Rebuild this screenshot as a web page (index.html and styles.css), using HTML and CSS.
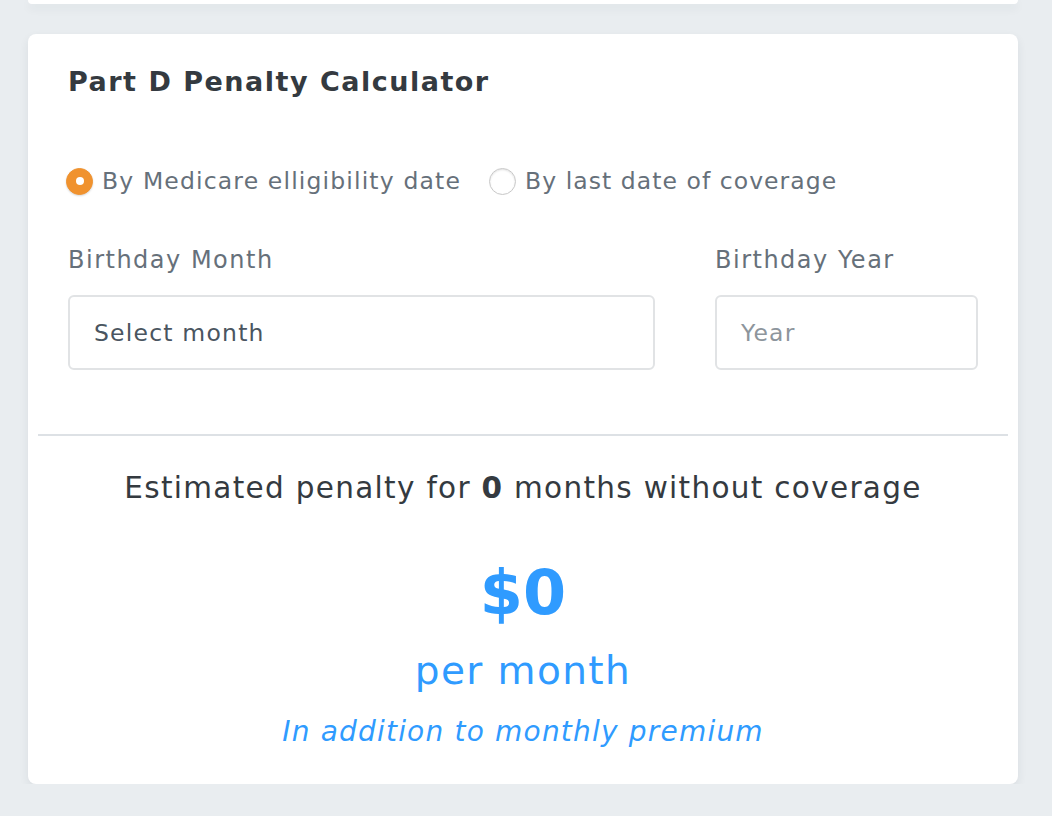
FILE: index.html
```html
<!DOCTYPE html>
<html>
<head>
<meta charset="utf-8">
<link rel="stylesheet" href="styles.css">
</head>
<body>
<div class="page">
  <div class="card card-top"></div>
  <div class="card calc">
    <div class="calc-body">
      <h2 class="title">Part D Penalty Calculator</h2>
      <div class="radios">
        <label class="radio"><span class="dot checked"></span><span>By Medicare elligibility date</span></label>
        <label class="radio"><span class="dot"></span><span>By last date of coverage</span></label>
      </div>
      <div class="fields">
        <div class="field">
          <div class="label">Birthday Month</div>
          <div class="input">Select month</div>
        </div>
        <div class="field">
          <div class="label">Birthday Year</div>
          <div class="input placeholder">Year</div>
        </div>
      </div>
    </div>
    <div class="divider"></div>
    <div class="result">
      <div class="estimate">Estimated penalty for <b>0</b> months without coverage</div>
      <div class="amount">$0</div>
      <div class="per">per month</div>
      <div class="note">In addition to monthly premium</div>
    </div>
  </div>
</div>
</body>
</html>
```

FILE: styles.css
```css
html, body {
  margin: 0;
  padding: 0;
  background: #e9edf0;
  font-family: "DejaVu Sans", "Open Sans", sans-serif;
}
.page {
  width: 990px;
  margin-left: 28px;
}
.card {
  background: #fff;
  border-radius: 8px;
  box-shadow: 0 4px 10px rgba(40, 50, 60, 0.08);
}
.card-top {
  height: 4px;
  border-radius: 0 0 8px 8px;
  margin-bottom: 30px;
}
.calc {
  height: 750px;
  box-sizing: border-box;
  padding-top: 30px;
}
.calc-body {
  padding: 0 40px;
}
.title {
  margin: 0;
  font-size: 27px;
  font-weight: bold;
  color: #343a40;
  line-height: 36px;
  letter-spacing: 1.5px;
}
.radios {
  display: flex;
  gap: 30px;
  margin-top: 67px;
  align-items: center;
}
.radio {
  display: flex;
  align-items: center;
  gap: 9px;
  font-size: 23.5px;
  color: #66707a;
  margin-left: -2px;
  letter-spacing: 1.05px;
}
.radio:first-child {
  letter-spacing: 1.15px;
}
.dot {
  width: 27px;
  height: 27px;
  box-sizing: border-box;
  border-radius: 50%;
  border: 1px solid #c8c8c8;
  background: #fff;
  box-shadow: inset 0 1px 2px rgba(0,0,0,0.12);
  position: relative;
  flex: none;
}
.dot.checked {
  background: #f0922e;
  border-color: #f0922e;
  box-shadow: 0 1px 2px rgba(0,0,0,0.15);
}
.dot.checked::after {
  content: "";
  position: absolute;
  left: 50%;
  top: 50%;
  width: 8px;
  height: 8px;
  margin: -4px 0 0 -4px;
  border-radius: 50%;
  background: #fff;
}
.fields {
  display: grid;
  grid-template-columns: 587px 1fr;
  gap: 60px;
  margin-top: 50px;
}
.label {
  font-size: 24px;
  color: #66707a;
  line-height: 30px;
  letter-spacing: 1.5px;
}
.input {
  margin-top: 20px;
  height: 75px;
  box-sizing: border-box;
  border: 2px solid #e1e3e5;
  border-radius: 6px;
  padding-left: 24px;
  display: flex;
  align-items: center;
  font-size: 23.5px;
  color: #4a5560;
  letter-spacing: 1.2px;
}
.input.placeholder {
  color: #8d959c;
}
.divider {
  margin: 64px 10px 0;
  height: 2px;
  background: #dde1e5;
}
.result {
  text-align: center;
  padding-top: 32px;
}
.estimate {
  font-size: 29.5px;
  color: #343a40;
  line-height: 40px;
  letter-spacing: 1.3px;
}
.estimate b {
  font-weight: bold;
}
.amount {
  margin-top: 50px;
  font-size: 62px;
  font-weight: bold;
  color: #2f9bff;
  line-height: 70px;
}
.per {
  margin-top: 20px;
  font-size: 39px;
  color: #2f9bff;
  line-height: 46px;
  letter-spacing: 1.4px;
}
.note {
  margin-top: 20px;
  font-size: 28px;
  font-style: italic;
  color: #2f9bff;
  line-height: 36px;
  letter-spacing: 1.2px;
}
```
